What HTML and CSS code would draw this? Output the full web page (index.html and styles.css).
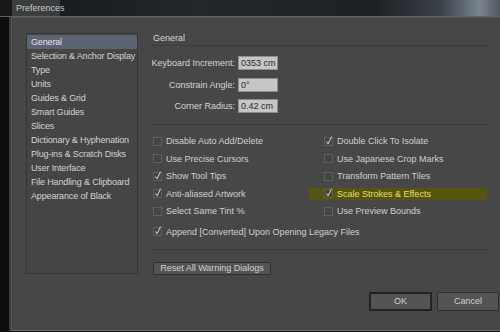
FILE: index.html
```html
<!DOCTYPE html>
<html lang="en">
<head>
    <meta charset="UTF-8">
    <title>Preferences</title>
    <link rel="stylesheet" href="styles.css">
</head>
<body>
    <div class="titlebar">
        <div class="tab">Preferences</div>
        <div class="desk"></div>
    </div>
    <div class="main">
        <div class="edge"></div>
        <div class="dialog">
            <div class="content">
                <ul class="nav">
                    <li class="selected">General</li>
                    <li>Selection &amp; Anchor Display</li>
                    <li>Type</li>
                    <li>Units</li>
                    <li>Guides &amp; Grid</li>
                    <li>Smart Guides</li>
                    <li>Slices</li>
                    <li>Dictionary &amp; Hyphenation</li>
                    <li>Plug-ins &amp; Scratch Disks</li>
                    <li>User Interface</li>
                    <li>File Handling &amp; Clipboard</li>
                    <li>Appearance of Black</li>
                </ul>
                <div class="panel">
                    <div class="heading">General</div>
                    <div class="fields">
                        <div class="field">
                            <label>Keyboard Increment:</label>
                            <span class="input">0353 cm</span>
                        </div>
                        <div class="field">
                            <label>Constrain Angle:</label>
                            <span class="input">0°</span>
                        </div>
                        <div class="field">
                            <label>Corner Radius:</label>
                            <span class="input">0.42 cm</span>
                        </div>
                    </div>
                    <div class="options">
                        <div class="opt"><span class="box"></span>Disable Auto Add/Delete</div>
                        <div class="opt"><span class="box on"></span>Double Click To Isolate</div>
                        <div class="opt"><span class="box"></span>Use Precise Cursors</div>
                        <div class="opt"><span class="box"></span>Use Japanese Crop Marks</div>
                        <div class="opt"><span class="box on"></span>Show Tool Tips</div>
                        <div class="opt"><span class="box"></span>Transform Pattern Tiles</div>
                        <div class="opt"><span class="box on"></span>Anti-aliased Artwork</div>
                        <div class="opt marked"><span class="box on"></span>Scale Strokes &amp; Effects</div>
                        <div class="opt"><span class="box"></span>Select Same Tint %</div>
                        <div class="opt"><span class="box"></span>Use Preview Bounds</div>
                    </div>
                    <div class="opt wide"><span class="box on"></span>Append [Converted] Upon Opening Legacy Files</div>
                    <div class="reset-row">
                        <button class="btn reset">Reset All Warning Dialogs</button>
                    </div>
                </div>
            </div>
            <div class="actions">
                <button class="btn ok">OK</button>
                <button class="btn cancel">Cancel</button>
            </div>
        </div>
    </div>
</body>
</html>
```

FILE: styles.css
```css
body {
    margin: 0;
    width: 500px;
    height: 332px;
    overflow: hidden;
    background-color: #101112;
    font-family: "Liberation Sans", Arial, sans-serif;
    font-size: 9px;
    color: #d4d4d4;
}
.titlebar {
    display: flex;
    height: 16px;
    background: linear-gradient(90deg, #16181a 0%, #23272b 40%, #1d2125 75%, #3a4047 88%, #7a8591 96%, #4f565e 100%);
    border-bottom: 1px solid #5f6061;
}
.tab {
    width: 44px;
    margin-left: 12px;
    padding-left: 4px;
    line-height: 16px;
    font-size: 9px;
    color: #c9c9c9;
    background-color: #3b3c3e;
}
.desk {
    flex: 1;
}
.main {
    display: flex;
    height: 314px;
}
.edge {
    flex-shrink: 0;
    width: 9px;
    background-color: #0e0e0e;
    border-right: 2px solid #3a3a3a;
}
.dialog {
    width: 500px;
    flex-shrink: 0;
    background-color: #474747;
    border-left: 1px solid #5a5a5a;
    border-top: 1px solid #555555;
    border-bottom: 1px solid #6a6a6a;
    box-shadow: inset 1px 0 0 #3c3c3c;
    padding: 15px 0 0 14px;
    box-sizing: border-box;
}
.content {
    display: flex;
    gap: 13px;
}
.nav {
    list-style: none;
    margin: 0;
    padding: 1px 0 0 0;
    width: 110px;
    height: 238px;
    border: 1px solid #363636;
    background-color: #454545;
}
.nav li {
    height: 14px;
    line-height: 14px;
    padding-left: 4px;
    letter-spacing: -0.15px;
    white-space: nowrap;
    color: #d2d2d2;
}
.nav li.selected {
    background-color: #5c6373;
    color: #e4e4e4;
}
.panel {
    width: 340px;
}
.heading {
    padding-left: 2px;
    height: 11px;
    line-height: 11px;
    color: #d6d6d6;
    border-bottom: 1px solid #3b3b3b;
    padding-bottom: 1px;
}
.fields {
    display: flex;
    flex-direction: column;
    gap: 7.5px;
    padding: 10px 0 11px 0;
    border-bottom: 1px solid #3b3b3b;
}
.field {
    display: flex;
    align-items: center;
    gap: 3px;
}
.field label {
    width: 84px;
    text-align: right;
    white-space: nowrap;
}
.input {
    width: 36px;
    height: 12px;
    line-height: 12px;
    padding-left: 2px;
    background-color: #c6c6c6;
    border: 1px solid #8d8d8d;
    color: #2a2a2a;
}
.options {
    display: grid;
    grid-template-columns: 171px 169px;
    row-gap: 5px;
    padding: 10px 0 0 2px;
}
.opt {
    display: flex;
    align-items: center;
    height: 12.5px;
    white-space: nowrap;
    color: #d0d0d0;
}
.opt.marked {
    margin: 0 6px 0 -15px;
    padding-left: 15px;
    background-color: #555410;
    color: #e2e06a;
}
.opt.wide {
    padding: 8px 0 0 2px;
    height: 12px;
}
.box {
    position: relative;
    width: 7px;
    height: 7px;
    margin-right: 4px;
    background-color: #444444;
    border: 1px solid #5f5f5f;
}
.box.on::after {
    content: "";
    position: absolute;
    left: 1px;
    top: -2px;
    width: 6px;
    height: 9px;
    background: url("data:image/svg+xml,%3Csvg xmlns='http://www.w3.org/2000/svg' viewBox='0 0 6 9'%3E%3Cpath d='M0.5 5.5 L2 7.8 L5.6 0.6' fill='none' stroke='%23dcdcdc' stroke-width='1'/%3E%3C/svg%3E") no-repeat;
}
.opt.marked .box.on::after {
    background: url("data:image/svg+xml,%3Csvg xmlns='http://www.w3.org/2000/svg' viewBox='0 0 6 9'%3E%3Cpath d='M0.5 5.5 L2 7.8 L5.6 0.6' fill='none' stroke='%23e2e06a' stroke-width='1'/%3E%3C/svg%3E") no-repeat;
}
.reset-row {
    margin-top: 11px;
    border-top: 1px solid #3b3b3b;
    padding: 12px 0 0 2px;
}
.btn {
    font-family: "Liberation Sans", Arial, sans-serif;
    font-size: 9px;
    color: #cfcfcf;
    background-color: #545454;
    border: 1px solid #303030;
    border-radius: 1px;
    padding: 0;
}
.reset {
    width: 118px;
    height: 13px;
    line-height: 11px;
}
.actions {
    display: flex;
    gap: 5px;
    padding: 17px 0 0 343px;
}
.ok,
.cancel {
    width: 63px;
    height: 19px;
}
.ok {
    border: 2px solid #232323;
}
.cancel {
    width: 62px;
}
```
